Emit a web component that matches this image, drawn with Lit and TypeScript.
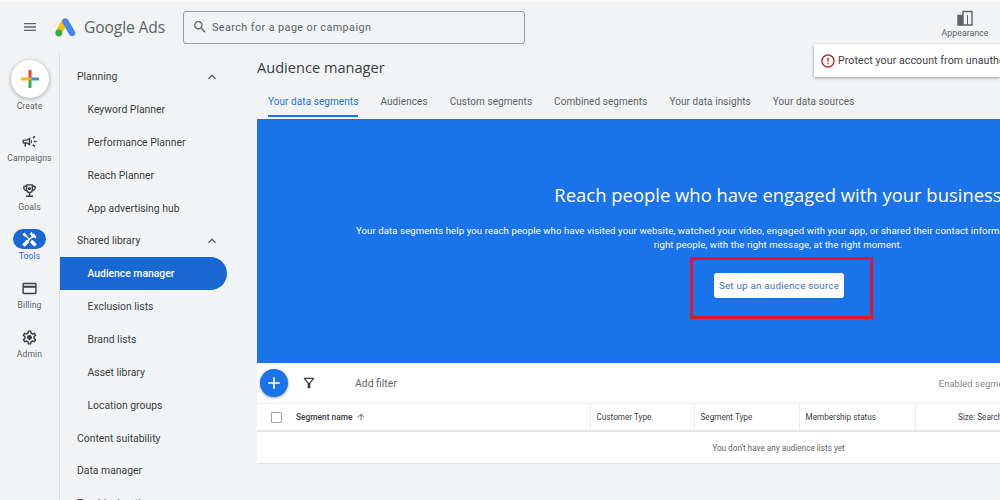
import { LitElement, html, css, svg } from "lit";
import { customElement } from "lit/decorators.js";

const P = {
  menu: "M3 18h18v-2H3v2zm0-5h18v-2H3v2zm0-7v2h18V6H3z",
  search: "M15.5 14h-.79l-.28-.27C15.41 12.59 16 11.11 16 9.5 16 5.91 13.09 3 9.5 3S3 5.91 3 9.5 5.91 16 9.5 16c1.61 0 3.09-.59 4.23-1.57l.27.28v.79l5 4.99L20.49 19l-4.99-5zm-6 0C7.01 14 5 11.99 5 9.5S7.01 5 9.5 5 14 7.01 14 9.5 11.99 14 9.5 14z",
  campaign: "M18 11v2h4v-2h-4zm-2 6.61c.96.71 2.21 1.65 3.2 2.39.4-.53.8-1.07 1.2-1.6-.99-.74-2.24-1.68-3.2-2.4-.4.54-.8 1.08-1.2 1.61zM20.4 5.6c-.4-.53-.8-1.07-1.2-1.6-.99.74-2.24 1.68-3.2 2.4.4.53.8 1.07 1.2 1.6.96-.72 2.21-1.65 3.2-2.4zM4 9c-1.1 0-2 .9-2 2v2c0 1.1.9 2 2 2h1v4h2v-4h1l5 3V6L8 9H4zm5.03 1.71L11 9.53v4.94l-1.97-1.18-.48-.29H4v-2h4.55l.48-.29zM15.5 12c0-1.33-.58-2.53-1.5-3.35v6.69c.92-.81 1.5-2.01 1.5-3.34z",
  goals: "M19 5h-2V3H7v2H5c-1.1 0-2 .9-2 2v1c0 2.55 1.92 4.63 4.39 4.94.63 1.5 1.98 2.63 3.61 2.96V19H7v2h10v-2h-4v-3.1c1.63-.33 2.98-1.46 3.61-2.96C19.08 12.63 21 10.55 21 8V7c0-1.1-.9-2-2-2zM5 8V7h2v3.82C5.84 10.4 5 9.3 5 8zm7 6c-1.65 0-3-1.35-3-3V5h6v6c0 1.65-1.35 3-3 3zm7-6c0 1.3-.84 2.4-2 2.82V7h2v1zM12 7a2.2 2.2 0 1 0 0 4.4A2.2 2.2 0 0 0 12 7z",
  tools: "M21.67 18.17l-5.3-5.3h-.99l-2.54 2.54v.99l5.3 5.3c.39.39 1.02.39 1.41 0l2.12-2.12c.39-.38.39-1.02 0-1.41zM17.34 10.19l1.41-1.41 2.12 2.12c1.17-1.17 1.17-3.07 0-4.24l-3.54-3.54-1.41 1.41V1.71l-.7-.71-3.54 3.54.71.71h2.83l-1.41 1.41 1.06 1.06-2.89 2.89-4.13-4.13V5.06L4.83 2.04 2 4.87 5.03 7.9h1.41l4.13 4.13-.85.85H7.6l-5.3 5.3c-.39.39-.39 1.02 0 1.41l2.12 2.12c.39.39 1.02.39 1.41 0l5.3-5.3v-2.12l5.15-5.15 1.06 1.05z",
  billing: "M20 4H4c-1.11 0-1.99.89-1.99 2L2 18c0 1.11.89 2 2 2h16c1.11 0 2-.89 2-2V6c0-1.11-.89-2-2-2zm0 14H4v-7h16v7zm0-10H4V6h16v2z",
  admin: "M19.43 12.98c.04-.32.07-.64.07-.98 0-.34-.03-.66-.07-.98l2.11-1.65c.19-.15.24-.42.12-.64l-2-3.46c-.09-.16-.26-.25-.44-.25-.06 0-.12.01-.17.03l-2.49 1c-.52-.4-1.08-.73-1.69-.98l-.38-2.65C14.46 2.18 14.25 2 14 2h-4c-.25 0-.46.18-.49.42l-.38 2.65c-.61.25-1.17.59-1.69.98l-2.49-1c-.06-.02-.12-.03-.18-.03-.17 0-.34.09-.43.25l-2 3.46c-.13.22-.07.49.12.64l2.11 1.65c-.04.32-.07.65-.07.98 0 .33.03.66.07.98l-2.11 1.65c-.19.15-.24.42-.12.64l2 3.46c.09.16.26.25.44.25.06 0 .12-.01.17-.03l2.49-1c.52.4 1.08.73 1.69.98l.38 2.65c.03.24.24.42.49.42h4c.25 0 .46-.18.49-.42l.38-2.65c.61-.25 1.17-.59 1.69-.98l2.49 1c.06.02.12.03.18.03.17 0 .34-.09.43-.25l2-3.46c.12-.22.07-.49-.12-.64l-2.11-1.65zm-1.98-1.71c.04.31.05.52.05.73 0 .21-.02.43-.05.73l-.14 1.13.89.7 1.08.84-.7 1.21-1.27-.51-1.04-.42-.9.68c-.43.32-.84.56-1.25.73l-1.06.43-.16 1.13-.2 1.35h-1.4l-.19-1.35-.16-1.13-1.06-.43c-.43-.18-.83-.41-1.23-.71l-.91-.7-1.06.43-1.27.51-.7-1.21 1.08-.84.89-.7-.14-1.13c-.03-.31-.05-.54-.05-.74s.02-.43.05-.73l.14-1.13-.89-.7-1.08-.84.7-1.21 1.27.51 1.04.42.9-.68c.43-.32.84-.56 1.25-.73l1.06-.43.16-1.13.2-1.35h1.39l.19 1.35.16 1.13 1.06.43c.43.18.83.41 1.23.71l.91.7 1.06-.43 1.27-.51.7 1.21-1.07.85-.89.7.14 1.13zM12 8.5a3.5 3.5 0 1 0 0 7 3.5 3.5 0 0 0 0-7z",
  filter: "M7 6h10l-5.01 6.3L7 6zm-2.75-.39C6.27 8.2 10 13 10 13v6c0 .55.45 1 1 1h2c.55 0 1-.45 1-1v-6s3.72-4.8 5.74-7.39c.51-.66.04-1.61-.79-1.61H5.04c-.83 0-1.3.95-.79 1.61z",
  up: "M12 8l-6 6 1.41 1.41L12 10.83l4.59 4.58L18 14z",
  arrow: "M4 12l1.41 1.41L11 7.83V20h2V7.83l5.58 5.59L20 12l-8-8-8 8z",
  alert: "M11 15h2v2h-2zm0-8h2v6h-2zm.99-5C6.47 2 2 6.48 2 12s4.47 10 9.99 10C17.52 22 22 17.52 22 12S17.52 2 11.99 2zM12 20c-4.42 0-8-3.58-8-8s3.58-8 8-8 8 3.58 8 8-3.58 8-8 8z",
  plus: "M19 13h-6v6h-2v-6H5v-2h6V5h2v6h6v2z",
};

const icon = (d: string, size: number) => html`<svg width=${size} height=${size} viewBox="0 0 24 24" fill="currentColor" aria-hidden="true">${svg`<path d=${d}></path>`}</svg>`;

const rail = [
  { label: "Campaigns", d: P.campaign },
  { label: "Goals", d: P.goals },
  { label: "Tools", d: P.tools, active: true },
  { label: "Billing", d: P.billing },
  { label: "Admin", d: P.admin },
];

const nav = [
  { t: "Planning", top: true, chev: true },
  { t: "Keyword Planner" },
  { t: "Performance Planner" },
  { t: "Reach Planner" },
  { t: "App advertising hub" },
  { t: "Shared library", top: true, chev: true },
  { t: "Audience manager", active: true },
  { t: "Exclusion lists" },
  { t: "Brand lists" },
  { t: "Asset library" },
  { t: "Location groups" },
  { t: "Content suitability", top: true },
  { t: "Data manager", top: true },
  { t: "Troubleshooting", top: true },
];

const tabs = ["Your data segments", "Audiences", "Custom segments", "Combined segments", "Your data insights", "Your data sources"];

@customElement("app-root")
export class AppRoot extends LitElement {
  static styles = css`
    :host {
      display: block;
      position: relative;
      width: 1000px;
      height: 500px;
      overflow: hidden;
      background: #f1f3f4;
      font-family: Roboto, "Liberation Sans", sans-serif;
      color: #3c4043;
      box-sizing: border-box;
      border-top: 2px solid #fbfbfb;
    }
    svg { display: block; flex: none; }
    .top { display: flex; align-items: center; height: 50px; }
    .menu { width: 55px; padding-left: 4px; box-sizing: border-box; flex: none; display: flex; justify-content: center; color: #5f6368; }
    .logo { display: flex; align-items: center; gap: 8px; width: 128px; flex: none; }
    .word { font-family: "Open Sans", Roboto, sans-serif; font-size: 15.6px; color: #5f6368; letter-spacing: -0.1px; }
    .search { box-sizing: border-box; width: 342px; height: 33px; border: 1px solid #9aa0a6; border-radius: 3px; display: flex; align-items: center; gap: 4px; padding-left: 8px; font-size: 10.8px; color: #5f6368; letter-spacing: 0.42px; }
    .search svg { color: #5f6368; }
    .appearance { margin-left: auto; width: 70px; display: flex; flex-direction: column; align-items: center; gap: 2px; font-size: 8.8px; color: #5f6368; padding-bottom: 6px; }
    .body { display: flex; height: 448px; }
    .rail { box-sizing: border-box; width: 60px; flex: none; border-right: 1px solid #dfe1e5; display: flex; flex-direction: column; align-items: center; padding-top: 8px; }
    .create { width: 38px; height: 38px; flex: none; border-radius: 50%; background: #fff; box-shadow: 0 1px 4px rgba(60,64,67,.45); display: flex; align-items: center; justify-content: center; }
    .rail-label { font-size: 8.6px; color: #5f6368; letter-spacing: 0.1px; line-height: 12px; }
    .create-label { margin-top: 2px; margin-bottom: 17px; }
    .rail-item { height: 49px; flex: none; display: flex; flex-direction: column; align-items: center; color: #5f6368; }
    .rail-icon { width: 33px; height: 20px; border-radius: 10px; display: flex; align-items: center; justify-content: center; margin-bottom: 0.5px; margin-top: 2px; color: #3c4043; }
    .rail-item.active .rail-icon { background: #1967d2; color: #fff; }
    .rail-item.active .rail-label { color: #1967d2; }
    .nav { width: 197px; flex: none; padding-top: 8.3px; }
    .nav-row { box-sizing: border-box; width: 167px; height: 32.85px; display: flex; align-items: center; justify-content: space-between; padding-left: 27.5px; padding-right: 7px; font-size: 10.4px; letter-spacing: 0; color: #3c4043; }
    .nav-row.top { padding-left: 17px; }
    .nav-row svg { color: #5f6368; }
    .nav-row.active { background: #1967d2; color: #fff; border-radius: 0 17px 17px 0; font-weight: 500; letter-spacing: -0.02px; }
    .main { flex: 1; min-width: 0; overflow: hidden; }
    .inner { width: 1042px; }
    .title { font-family: "Open Sans", Roboto, sans-serif; font-size: 14.6px; height: 31px; line-height: 30px; color: #3c4043; }
    .tabs { display: flex; gap: 22px; padding-left: 11px; height: 36px; box-sizing: border-box; }
    .tab { font-size: 10px; letter-spacing: 0.07px; color: #5f6368; display: flex; align-items: center; padding-top: 4px; height: 33px; box-sizing: border-box; white-space: nowrap; }
    .tab.active { color: #1a73e8; border-bottom: 2px solid #1a73e8; height: 34px; }
    .banner { height: 244px; background: #1a73e8; color: #fff; display: flex; flex-direction: column; align-items: center; text-align: center; box-sizing: border-box; padding-top: 63px; }
    .banner h2 { margin: 0; font-family: "Open Sans", Roboto, sans-serif; font-weight: 400; font-size: 18.45px; line-height: 26px; height: 26px; white-space: nowrap; }
    .banner p { margin: 16px 0 0; font-size: 9.6px; line-height: 14px; letter-spacing: 0.1px; white-space: nowrap; }
    .line { display: block; }
    .line.first { padding-right: 176px; }
    .mark { box-sizing: border-box; width: 183px; height: 62px; margin-top: 5px; margin-left: 7px; border: 3px solid #e0172c; display: flex; align-items: center; padding: 0 0 5px 21px; }
    .cta { width: 130px; height: 25px; background: #fff; border-radius: 3px; color: #3f73b8; font-size: 9.8px; letter-spacing: 0.22px; display: flex; align-items: center; justify-content: center; }
    .table { background: #fff; border-bottom: 1px solid #e3e5e8; }
    .tools { height: 40px; display: flex; align-items: center; }
    .fab { width: 28px; height: 28px; margin-left: 3px; border-radius: 50%; background: #1a73e8; color: #fff; display: flex; align-items: center; justify-content: center; box-shadow: 0 1px 3px rgba(60,64,67,.5); }
    .funnel { margin-left: 13px; color: #3c4043; }
    .addf { margin-left: 38px; font-size: 10.4px; color: #5f6368; white-space: nowrap; }
    .enabled { margin-left: 542px; font-size: 9.3px; color: #80868b; letter-spacing: 0.1px; white-space: nowrap; }
    .head { display: grid; grid-template-columns: 333px 104px 105px 116px 384px; height: 29px; border-top: 1px solid #e8eaed; border-bottom: 2px solid #e3e5e8; box-sizing: border-box; font-size: 8.2px; color: #3c4043; }
    .cell { display: flex; align-items: center; padding-left: 5.5px; border-left: 1px solid #e8eaed; white-space: nowrap; }
    .cell.first { border-left: 0; padding-left: 14px; font-weight: 500; font-size: 8.4px; }
    .cell.size { padding-left: 42px; }
    .check { width: 9px; height: 9px; border: 1px solid #9aa0a6; border-radius: 1px; margin-right: 14px; }
    .arrow { margin-left: 3px; color: #5f6368; }
    .empty { height: 31px; display: flex; align-items: center; justify-content: center; padding-left: 1px; font-size: 8.2px; color: #5f6368; }
    .toast { position: absolute; left: 814px; top: 42px; width: 186px; overflow: hidden; height: 33px; background: #fff; box-shadow: 0 1px 3px rgba(60,64,67,.5); display: flex; align-items: center; gap: 2px; padding-left: 6px; box-sizing: border-box; font-size: 10.6px; letter-spacing: 0.08px; color: #3c4043; white-space: nowrap; }
    .toast svg { color: #b3261e; }
  `;

  render() {
    return html`
      <div class="top">
        <div class="menu">${icon(P.menu, 16)}</div>
        <div class="logo">
          <svg width="21" height="19" viewBox="0 0 21 19" aria-hidden="true">
            <path d="M9.5 3.5 3.8 14.5" stroke="#fbbc04" stroke-width="6.4" stroke-linecap="round" fill="none"></path>
            <path d="M10.5 3.5 17 15" stroke="#4285f4" stroke-width="6.4" stroke-linecap="round" fill="none"></path>
            <circle cx="3.8" cy="15" r="3.4" fill="#34a853"></circle>
          </svg>
          <span class="word">Google Ads</span>
        </div>
        <div class="search">${icon(P.search, 16)}<span>Search for a page or campaign</span></div>
        <div class="appearance">
          <svg width="16" height="16" viewBox="0 0 16 16" aria-hidden="true">
            <path d="M1 5.5h5V15H1z M6 1.5h9V15H6z" fill="none" stroke="#5f6368" stroke-width="1.4"></path>
            <path d="M1 6h5v9H1z M10 5h1v10h-1z" fill="#5f6368"></path>
          </svg>
          <span>Appearance</span>
        </div>
      </div>
      <div class="body">
        <div class="rail">
          <div class="create">
            <svg width="18" height="18" viewBox="0 0 18 18" aria-hidden="true">
              <path d="M9 1v8" stroke="#ea4335" stroke-width="3" stroke-linecap="round"></path>
              <path d="M9 9h8" stroke="#4285f4" stroke-width="3" stroke-linecap="round"></path>
              <path d="M9 9v8" stroke="#34a853" stroke-width="3" stroke-linecap="round"></path>
              <path d="M1 9h8" stroke="#fbbc04" stroke-width="3" stroke-linecap="round"></path>
            </svg>
          </div>
          <div class="rail-label create-label">Create</div>
          ${rail.map((r) => html`
            <div class="rail-item ${r.active ? "active" : ""}">
              <div class="rail-icon">${icon(r.d, 17)}</div>
              <div class="rail-label">${r.label}</div>
            </div>`)}
        </div>
        <div class="nav">
          ${nav.map((n) => html`
            <div class="nav-row ${n.top ? "top" : ""} ${n.active ? "active" : ""}">
              <span>${n.t}</span>${n.chev ? icon(P.up, 16) : ""}
            </div>`)}
        </div>
        <div class="main">
          <div class="inner">
            <div class="title">Audience manager</div>
            <div class="tabs">
              ${tabs.map((t, i) => html`<div class="tab ${i === 0 ? "active" : ""}">${t}</div>`)}
            </div>
            <div class="banner">
              <h2>Reach people who have engaged with your business</h2>
              <p>
                <span class="line first">Your data segments help you reach people who have visited your website, watched your video, engaged with your app, or shared their contact information.</span>
                <span class="line">right people, with the right message, at the right moment.</span>
              </p>
              <div class="mark"><div class="cta">Set up an audience source</div></div>
            </div>
            <div class="table">
              <div class="tools">
                <div class="fab">${icon(P.plus, 20)}</div>
                <div class="funnel">${icon(P.filter, 16)}</div>
                <div class="addf">Add filter</div>
                <div class="enabled">Enabled segments</div>
              </div>
              <div class="head">
                <div class="cell first"><span class="check"></span>Segment name<span class="arrow">${icon(P.arrow, 10)}</span></div>
                <div class="cell">Customer Type</div>
                <div class="cell">Segment Type</div>
                <div class="cell">Membership status</div>
                <div class="cell size">Size: Search</div>
              </div>
              <div class="empty">You don't have any audience lists yet</div>
            </div>
          </div>
        </div>
      </div>
      <div class="toast">${icon(P.alert, 16)}<span>Protect your account from unauthorized activity</span></div>
    `;
  }
}
